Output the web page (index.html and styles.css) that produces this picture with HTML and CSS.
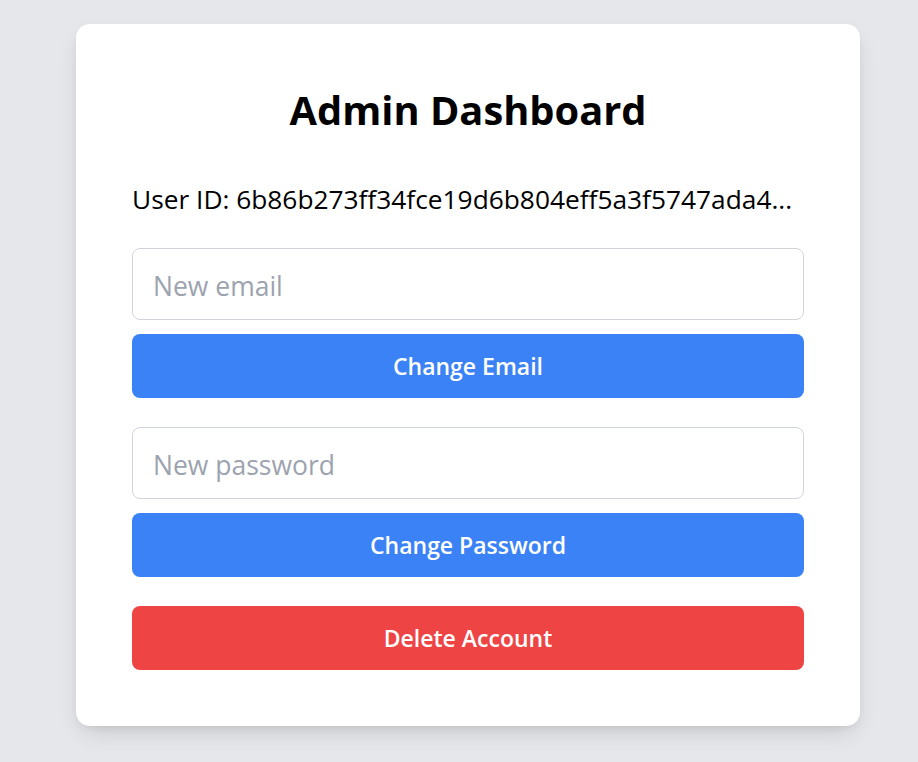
FILE: index.html
```html
<!DOCTYPE html>
<html lang="en">
<head>
<meta charset="utf-8">
<title>Admin Dashboard</title>
<link rel="stylesheet" href="styles.css">
</head>
<body>
<main class="card">
  <h1 class="title">Admin Dashboard</h1>
  <p class="user-id">User ID: 6b86b273ff34fce19d6b804eff5a3f5747ada4...</p>
  <div class="group">
    <input class="field" type="email" placeholder="New email">
    <button class="btn btn-blue" type="button">Change Email</button>
  </div>
  <div class="group">
    <input class="field" type="password" placeholder="New password">
    <button class="btn btn-blue" type="button">Change Password</button>
  </div>
  <button class="btn btn-red" type="button">Delete Account</button>
</main>
</body>
</html>
```

FILE: styles.css
```css
* { box-sizing: border-box; }
html, body { margin: 0; padding: 0; }
body {
  background: #e5e7eb;
  font-family: "Open Sans", "Noto Sans", sans-serif;
  color: #000;
  min-height: 762px;
  padding-top: 24px;
}
.card {
  width: 784px;
  margin-left: 76px;
  background: #fff;
  border-radius: 14px;
  padding: 56px;
  box-shadow: 0 10px 26px -6px rgba(0,0,0,0.14), 0 4px 10px -4px rgba(0,0,0,0.10);
  display: flex;
  flex-direction: column;
}
.title {
  margin: 0 0 42px;
  font-size: 39.8px;
  line-height: 56px;
  padding-top: 2px;
  height: 56px;
  font-weight: 700;
  text-align: center;
}
.user-id {
  margin: 0 0 28px;
  font-size: 26.3px;
  line-height: 42px;
  white-space: nowrap;
}
.group {
  display: flex;
  flex-direction: column;
  gap: 14px;
  margin-bottom: 29px;
}
.field {
  height: 72px;
  width: 100%;
  border: 1px solid #d1d5db;
  border-radius: 8px;
  padding: 3px 20px 0;
  font-family: inherit;
  font-size: 26.5px;
  color: #111;
  background: #fff;
  outline: none;
}
.field::placeholder { color: #9ca3af; }
.btn {
  height: 64px;
  width: 100%;
  border: 0;
  border-radius: 8px;
  color: #fff;
  font-family: inherit;
  font-size: 23px;
  font-weight: 600;
  cursor: pointer;
}
.btn-blue { background: #3b82f6; }
.btn-red { background: #ef4444; }
```
